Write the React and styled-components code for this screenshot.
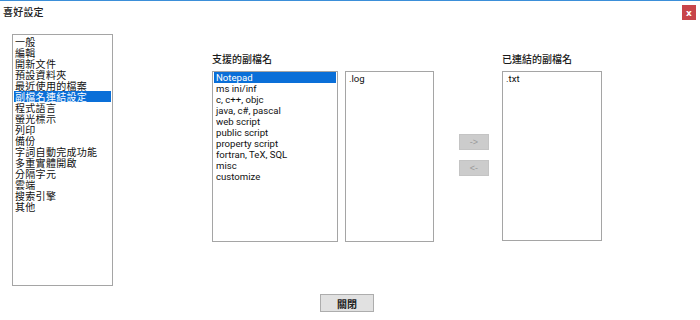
import React from 'react';
import styled, { createGlobalStyle } from 'styled-components';

const GlobalStyle = createGlobalStyle`
    html, body {
        margin: 0;
        padding: 0;
        background: #fff;
    }
    body {
        font-family: "Noto Sans CJK TC", "Liberation Sans", sans-serif;
    }
`;

const Window = styled.div`
    width: 700px;
    height: 320px;
    box-sizing: border-box;
    border-top: 1px solid #3b8fd9;
    background: #fff;
    display: flex;
    flex-direction: column;
    overflow: hidden;
`;

const TitleBar = styled.div`
    height: 21px;
    display: flex;
    align-items: center;
    justify-content: space-between;
    padding: 0 4px 0 3px;
`;

const Title = styled.span`
    font-size: 10px;
    color: #222;
    font-weight: 500;
    letter-spacing: 0.2px;
`;

const CloseButton = styled.div`
    width: 14px;
    height: 15px;
    background: #c8454a;
    color: #fff;
    font-family: "DejaVu Sans", sans-serif;
    font-size: 9px;
    font-weight: bold;
    display: flex;
    align-items: center;
    justify-content: center;
    margin-top: 2px;
`;

const Body = styled.div`
    display: flex;
    padding: 12px 0 0 12px;
`;

const ListBox = styled.div`
    width: ${p => p.$w}px;
    height: ${p => p.$h}px;
    box-sizing: border-box;
    border: 1px solid #a5a5a5;
    padding: ${p => p.$pad || 0}px 0 0 0;
    background: #fff;
    overflow: hidden;
`;

const Item = styled.div`
    height: 11px;
    margin: 0 1px;
    padding-left: ${p => p.$indent || 2}px;
    background: ${p => (p.$active ? '#0a6fd8' : 'transparent')};
`;

const ItemText = styled.span`
    display: inline-block;
    height: 11px;
    line-height: 11px;
    vertical-align: top;
    white-space: nowrap;
    font-family: ${p => (p.$latin ? 'Roboto, "Liberation Sans", sans-serif' : '"Noto Sans CJK TC", sans-serif')};
    font-size: ${p => p.$fs}px;
    letter-spacing: ${p => (p.$latin ? 0 : 0.3)}px;
    color: ${p => (p.$active ? '#fff' : '#111')};
`;

const Section = styled.div`
    display: flex;
    flex-direction: column;
    margin-left: ${p => p.$ml}px;
`;

const Label = styled.div`
    height: 37px;
    box-sizing: border-box;
    padding-top: 19px;
    font-size: 10px;
    line-height: 12px;
    color: #1a1a1a;
    font-weight: 500;
`;

const ListRow = styled.div`
    display: flex;
    gap: 7px;
`;

const ArrowColumn = styled.div`
    display: flex;
    flex-direction: column;
    gap: 10px;
    padding-top: 100px;
    margin-left: 25px;
`;

const ArrowButton = styled.div`
    width: 30px;
    height: 16px;
    background: #cccccc;
    border: 1px solid #c4c4c4;
    box-sizing: border-box;
    color: #9a9a9a;
    font-family: "Liberation Sans", sans-serif;
    font-size: 9px;
    display: flex;
    align-items: center;
    justify-content: center;
`;

const Footer = styled.div`
    display: flex;
    padding: 8px 0 0 320px;
`;

const FooterButton = styled.div`
    width: 54px;
    height: 18px;
    box-sizing: border-box;
    background: #e1e1e1;
    border: 1px solid #adadad;
    font-size: 10px;
    font-weight: 700;
    color: #222;
    display: flex;
    align-items: center;
    justify-content: center;
`;

const categories = [
    '一般', '編輯', '開新文件', '預設資料夾', '最近使用的檔案', '副檔名連結設定',
    '程式語言', '螢光標示', '列印', '備份', '字詞自動完成功能', '多重實體開啟',
    '分隔字元', '雲端', '搜索引擎', '其他',
];

const extensionGroups = [
    'Notepad', 'ms ini/inf', 'c, c++, objc', 'java, c#, pascal', 'web script',
    'public script', 'property script', 'fortran, TeX, SQL', 'misc', 'customize',
];

const Row = ({ text, active, latin, fs, indent }) => (
    <Item $active={active} $indent={indent}>
        <ItemText $active={active} $latin={latin} $fs={fs}>{text}</ItemText>
    </Item>
);

const App = () => {
    return (
        <>
            <GlobalStyle />
            <Window>
                <TitleBar>
                    <Title>喜好設定</Title>
                    <CloseButton>x</CloseButton>
                </TitleBar>
                <Body>
                    <ListBox $w={101} $h={252} $pad={1}>
                        {categories.map((c, i) => (
                            <Row key={c} text={c} active={i === 5} fs={10} indent={1} />
                        ))}
                    </ListBox>
                    <Section $ml={99}>
                        <Label>支援的副檔名</Label>
                        <ListRow>
                            <ListBox $w={126} $h={171}>
                                {extensionGroups.map((g, i) => (
                                    <Row key={g} text={g} active={i === 0} latin fs={9.6} />
                                ))}
                            </ListBox>
                            <ListBox $w={89} $h={171} $pad={1}>
                                <Row text=".log" latin fs={9.6} />
                            </ListBox>
                        </ListRow>
                    </Section>
                    <ArrowColumn>
                        <ArrowButton>-&gt;</ArrowButton>
                        <ArrowButton>&lt;-</ArrowButton>
                    </ArrowColumn>
                    <Section $ml={13}>
                        <Label>已連結的副檔名</Label>
                        <ListBox $w={100} $h={170} $pad={1}>
                            <Row text=".txt" latin fs={9.6} />
                        </ListBox>
                    </Section>
                </Body>
                <Footer>
                    <FooterButton>關閉</FooterButton>
                </Footer>
            </Window>
        </>
    );
};

export default App;
